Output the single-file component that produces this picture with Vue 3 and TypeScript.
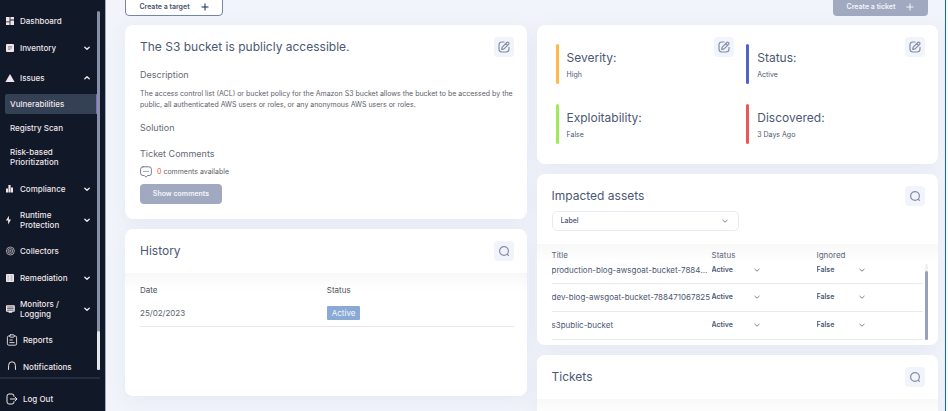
<script setup lang="ts">
import { ref } from 'vue'

interface NavChild { label: string; active?: boolean }
interface NavItem {
  label: string
  icon: string
  chevron?: 'up' | 'down'
  tall?: boolean
  children?: NavChild[]
}
interface Fact { label: string; value: string; tone: string; editable: boolean }
interface Asset { title: string; status: string; ignored: string }

const nav: NavItem[] = [
  { label: 'Dashboard', icon: 'dashboard' },
  { label: 'Inventory', icon: 'inventory', chevron: 'down' },
  {
    label: 'Issues', icon: 'issues', chevron: 'up',
    children: [
      { label: 'Vulnerabilities', active: true },
      { label: 'Registry Scan' },
      { label: 'Risk-based Prioritization' },
    ],
  },
  { label: 'Compliance', icon: 'compliance', chevron: 'down' },
  { label: 'Runtime Protection', icon: 'runtime', chevron: 'down', tall: true },
  { label: 'Collectors', icon: 'collectors' },
  { label: 'Remediation', icon: 'remediation', chevron: 'down' },
  { label: 'Monitors / Logging', icon: 'monitors', chevron: 'down', tall: true },
]

const facts: Fact[] = [
  { label: 'Severity:', value: 'High', tone: 'orange', editable: true },
  { label: 'Status:', value: 'Active', tone: 'blue', editable: true },
  { label: 'Exploitability:', value: 'False', tone: 'green', editable: false },
  { label: 'Discovered:', value: '3 Days Ago', tone: 'red', editable: false },
]

const label = ref('Label')
const assets = ref<Asset[]>([
  { title: 'production-blog-awsgoat-bucket-788471067825', status: 'Active', ignored: 'False' },
  { title: 'dev-blog-awsgoat-bucket-788471067825', status: 'Active', ignored: 'False' },
  { title: 's3public-bucket', status: 'Active', ignored: 'False' },
])
</script>

<template>
  <svg class="defs" aria-hidden="true">
    <symbol id="i-dashboard" viewBox="0 0 10 10">
      <path fill="currentColor" d="M1 1h3.6v4.4H1zM5.4 1H9v2.6H5.4zM1 6.2h3.6V9H1zM5.4 4.4H9V9H5.4z" />
    </symbol>
    <symbol id="i-inventory" viewBox="0 0 10 10">
      <rect x="1" y="1" width="8" height="8" rx="1" fill="currentColor" />
      <path d="M3 3.6h4M3 5h4M3 6.4h2.5" stroke="#111827" stroke-width=".4" />
    </symbol>
    <symbol id="i-issues" viewBox="0 0 10 10">
      <path fill="currentColor" d="M5 1l4.6 8H.4z" />
    </symbol>
    <symbol id="i-compliance" viewBox="0 0 10 10">
      <path fill="currentColor" d="M1 4.400h2v4H1zM3.400 1h2.200v7.400H3.400zM6 3.400h2v5H6z" />
    </symbol>
    <symbol id="i-runtime" viewBox="0 0 10 10">
      <path fill="currentColor" d="M3.9.8v3.6H6L3.1 9.4V5.6H.9z" />
    </symbol>
    <symbol id="i-collectors" viewBox="0 0 10 10">
      <g fill="none" stroke="currentColor" stroke-width=".8" opacity=".8">
        <circle cx="5.400" cy="5" r="4" /><circle cx="5.400" cy="5" r="2.4" /><circle cx="5.400" cy="5" r=".8" />
      </g>
    </symbol>
    <symbol id="i-remediation" viewBox="0 0 10 10">
      <rect x="1" y="1" width="8" height="8" rx=".8" fill="currentColor" />
      <path d="M2.6 3h1.2M2.6 5h1.2M2.6 7h1.2M5.6 3h1.8M5.6 5h1.8M5.6 7h1.8" stroke="#111827" stroke-width=".4" />
    </symbol>
    <symbol id="i-monitors" viewBox="0 0 10 10">
      <path fill="currentColor" d="M1.8 1.2h7.2q.8 0 .8.8v5q0 .8-.8.8H7.2v1H3.600v-1H1.800q-.8 0-.8-.8V2q0-.8.8-.8z" />
      <path d="M2.200 3h6.400M2.200 4.600h6.400M2.200 6.200h6.400" stroke="#111827" stroke-width=".6" />
    </symbol>
    <symbol id="i-reports" viewBox="0 0 12 12">
      <g fill="none" stroke="currentColor" stroke-width=".9" stroke-linecap="round" stroke-linejoin="round">
        <path d="M3.8 2H2.6Q1.4 2 1.4 3.4v6.4q0 1.4 1.4 1.4h6.4q1.4 0 1.4-1.4V3.4Q10.600 2 9.400 2H8.200" />
        <rect x="3.800" y=".8" width="4.400" height="2.400" rx=".8" />
        <path d="M3.800 6h2.600M3.800 8.600h4.400" />
      </g>
    </symbol>
    <symbol id="i-bell" viewBox="0 0 12 12">
      <path fill="none" stroke="currentColor" d="M1.800 10q.8-1 .8-3V4.400a3.400 3.600 0 0 1 6.800 0V7q0 2 .8 3z" />
    </symbol>
    <symbol id="i-logout" viewBox="0 0 12 12">
      <g fill="none" stroke="currentColor" stroke-linecap="round" stroke-linejoin="round">
        <path d="M8 3.400V3Q8 1 6 1H3Q1 1 1 3v6q0 2 2 2h3q2 0 2-2v-.4" />
        <path d="M4.400 6h6.400M9.200 4.200L11 6 9.200 7.800" />
      </g>
    </symbol>
    <symbol id="i-chevron" viewBox="0 0 8 8">
      <path fill="none" stroke="currentColor" stroke-linecap="round" stroke-linejoin="round" d="M1.800 3.200L4 5.200l2.200-2" />
    </symbol>
    <symbol id="i-plus" viewBox="0 0 8 8">
      <path fill="none" stroke="currentColor" stroke-width="1" d="M4 .5v7M.5 4h7" />
    </symbol>
    <symbol id="i-edit" viewBox="0 0 12 12">
      <g fill="none" stroke="currentColor" stroke-width="1.200" stroke-linecap="round" stroke-linejoin="round">
        <path d="M6 1H4Q1 1 1 4v4q0 3 3 3h4q3 0 3-3V6.400" />
        <path d="M8.800 1.500L4.500 5.800q-.4.400-.5 1l-.3 1.600 1.600-.3q.6-.1 1-.5l4.300-4.300q.7-.9 0-1.700-.9-.8-1.800-.1zM7.900 2.600l1.700 1.700" />
      </g>
    </symbol>
    <symbol id="i-search" viewBox="0 0 12 12">
      <g fill="none" stroke="currentColor" stroke-width="1.200" stroke-linecap="round">
        <circle cx="6" cy="6" r="4.400" /><path d="M9.400 9.400l1 1" />
      </g>
    </symbol>
    <symbol id="i-comment" viewBox="0 0 12 12">
      <g fill="none" stroke="currentColor" stroke-width=".9" stroke-linecap="round" stroke-linejoin="round">
        <path d="M3 .8h6q2.400 0 2.400 2.400v4q0 2.300-2.400 2.300H7.600L6 11.200 4.400 9.500H3Q.6 9.500.6 7.200v-4Q.6.8 3 .8z" />
        <path opacity=".7" d="M3.400 5.400h5.200" />
      </g>
    </symbol>
  </svg>

  <div class="page">
    <aside class="sidebar">
      <nav class="nav" aria-label="Main">
        <template v-for="item in nav" :key="item.label">
          <a href="#" class="nav-item" :class="{ tall: item.tall, parent: item.children }">
            <svg class="nav-icon"><use :href="'#i-' + item.icon" /></svg>
            <span class="nav-label">{{ item.label }}</span>
            <svg v-if="item.chevron" class="chevron" :class="item.chevron"><use href="#i-chevron" /></svg>
          </a>
          <div v-if="item.children" class="children">
            <a v-for="child in item.children" :key="child.label" href="#" class="child" :class="{ active: child.active }">
              <span>{{ child.label }}</span>
            </a>
          </div>
        </template>
        <a href="#" class="nav-item utility">
          <svg class="big-icon"><use href="#i-reports" /></svg><span>Reports</span>
        </a>
        <a href="#" class="nav-item utility">
          <svg class="big-icon"><use href="#i-bell" /></svg><span>Notifications</span>
        </a>
        <div class="nav-scroll"><i></i></div>
      </nav>
      <a href="#" class="logout">
        <svg class="big-icon"><use href="#i-logout" /></svg><span>Log Out</span>
      </a>
    </aside>

    <main class="main">
      <div class="topbar">
        <button type="button" class="btn outline">Create a target <svg class="plus"><use href="#i-plus" /></svg></button>
        <button type="button" class="btn solid">Create a ticket <svg class="plus"><use href="#i-plus" /></svg></button>
      </div>

      <div class="columns">
        <div class="column">
          <section class="card issue">
            <header class="issue-head">
              <h1>The S3 bucket is publicly accessible.</h1>
              <button type="button" class="icon-btn" aria-label="Edit issue"><svg><use href="#i-edit" /></svg></button>
            </header>
            <h2>Description</h2>
            <p class="description">
              The access control list (ACL) or bucket policy for the Amazon S3 bucket allows the bucket to be accessed by the
              public, all authenticated AWS users or roles, or any anonymous AWS users or roles.
            </p>
            <h2>Solution</h2>
            <h2 class="comments-title">Ticket Comments</h2>
            <p class="comments">
              <svg><use href="#i-comment" /></svg>
              <span><b>0</b> comments available</span>
            </p>
            <button type="button" class="show">Show comments</button>
          </section>

          <section class="card history">
            <header class="card-head">
              <h1>History</h1>
              <button type="button" class="icon-btn" aria-label="Search history"><svg><use href="#i-search" /></svg></button>
            </header>
            <div class="card-body">
              <table class="history-table">
                <thead><tr><th>Date</th><th>Status</th></tr></thead>
                <tbody><tr><td>25/02/2023</td><td><span class="tag">Active</span></td></tr></tbody>
              </table>
            </div>
          </section>
        </div>

        <div class="column">
          <section class="card facts">
            <div v-for="fact in facts" :key="fact.label" class="fact">
              <i class="bar" :class="fact.tone"></i>
              <div class="fact-text">
                <h3>{{ fact.label }}</h3>
                <p>{{ fact.value }}</p>
              </div>
              <button v-if="fact.editable" type="button" class="icon-btn" :aria-label="'Edit ' + fact.label">
                <svg><use href="#i-edit" /></svg>
              </button>
            </div>
          </section>

          <section class="card assets">
            <header class="assets-head">
              <div class="row">
                <h1>Impacted assets</h1>
                <button type="button" class="icon-btn" aria-label="Search assets"><svg><use href="#i-search" /></svg></button>
              </div>
              <div class="select label-select">
                <select v-model="label" aria-label="Label"><option>Label</option></select>
                <svg class="caret"><use href="#i-chevron" /></svg>
              </div>
            </header>
            <div class="card-body assets-body">
              <table class="assets-table">
                <thead><tr><th class="c-title">Title</th><th class="c-status">Status</th><th>Ignored</th></tr></thead>
                <tbody>
                  <tr v-for="asset in assets" :key="asset.title">
                    <td class="title">{{ asset.title }}</td>
                    <td>
                      <div class="select cell-select">
                        <select v-model="asset.status" :aria-label="'Status of ' + asset.title"><option>Active</option></select>
                        <svg class="caret"><use href="#i-chevron" /></svg>
                      </div>
                    </td>
                    <td>
                      <div class="select cell-select">
                        <select v-model="asset.ignored" :aria-label="'Ignored state of ' + asset.title"><option>False</option></select>
                        <svg class="caret"><use href="#i-chevron" /></svg>
                      </div>
                    </td>
                  </tr>
                </tbody>
              </table>
              <div class="table-scroll"><i></i></div>
            </div>
          </section>

          <section class="card tickets">
            <header class="card-head">
              <h1>Tickets</h1>
              <button type="button" class="icon-btn" aria-label="Search tickets"><svg><use href="#i-search" /></svg></button>
            </header>
            <div class="card-body"></div>
          </section>
        </div>
      </div>
    </main>
    <div class="edge"></div>
  </div>
</template>

<style>
body { background: #f1f4fa; overflow: hidden; }
</style>

<style scoped>
* { box-sizing: border-box; }
h1, h2, h3, p { margin: 0; font-weight: 400; }
a { color: inherit; text-decoration: none; }
button, select { font: inherit; color: inherit; border: 0; padding: 0; background: none; }
svg { display: block; flex: none; }
.defs { position: absolute; width: 0; height: 0; }

.page {
  display: flex;
  height: 100vh;
  overflow: hidden;
  font-family: Inter, "Liberation Sans", sans-serif;
  font-size: 8px;
  line-height: 10px;
  color: #4b5873;
  background: #f1f4fa;
}

.sidebar {
  display: flex;
  flex-direction: column;
  flex: none;
  width: 106px;
  background: #111827;
  color: #eee6ea;
  border-right: 1px solid #a3abc0;
  font-weight: 500;
}
.nav {
  position: relative;
  flex: 1;
  min-height: 0;
  overflow: hidden;
  padding: 7px 7px 0 5px;
}
.nav-item { display: flex; align-items: center; height: 27px; }
.nav-item.parent { height: 33px; }
.nav-item.tall { height: 35px; }
.nav-icon { width: 10px; height: 10px; margin-right: 5px; }
.nav-label { width: 56px; }
.chevron { width: 8px; height: 8px; margin-left: 7px; stroke-width: 1.4; }
.chevron.up { transform: rotate(180deg); }
.children { display: flex; flex-direction: column; gap: 4px; padding-bottom: 3px; }
.child { display: flex; align-items: center; height: 20px; padding-left: 5px; border-radius: 2px; }
.child:last-child { height: 30px; }
.child span { width: 70px; }
.child.active { background: #344054; border-right: 2px solid #8468c8; }
.utility { padding-left: 1px; gap: 5px; }
.big-icon { width: 12px; height: 12px; }
.nav-scroll {
  position: absolute;
  top: 11px;
  right: 5px;
  bottom: 0;
  width: 3px;
  background: #8790a8;
  border-radius: 2px;
}
.nav-scroll i { position: absolute; inset: auto 0 0; height: 39px; background: #e4e7ee; border-radius: 2px; }
.logout {
  display: flex;
  align-items: center;
  gap: 5px;
  height: 34px;
  margin: 7px 5px 0 0;
  padding: 8px 0 0 6px;
  border-top: 2px solid #242c3d;
}

.main { flex: 1; min-width: 0; padding: 0 7px 0 19px; overflow: hidden; }
.topbar {
  display: flex;
  justify-content: space-between;
  align-items: flex-end;
  height: 16px;
  padding-right: 10px;
  overflow: hidden;
}
.btn {
  display: flex;
  align-items: center;
  justify-content: center;
  gap: 11px;
  flex: none;
  width: 98px;
  height: 20px;
  padding-top: 1px;
  border-radius: 4px;
  font-size: 7px;
  font-weight: 600;
}
.btn.solid { width: 95px; background: #a1a9c0; color: #f3f5fa; }
.btn.outline { border: 1px solid #7884a8; background: #fff; color: #46526e; }
.btn.outline .plus { color: #17285c; }
.plus { width: 8px; height: 8px; }

.columns { display: grid; grid-template-columns: 1fr 1fr; gap: 10px; margin-top: 9px; }
.column { display: flex; flex-direction: column; gap: 10px; min-width: 0; }
.card { background: #fff; border-radius: 8px; box-shadow: 0 4px 20px rgba(80, 100, 150, .07); overflow: hidden; }
h1, h3 { font-size: 12px; line-height: 16px; }
.icon-btn {
  display: grid;
  place-items: center;
  flex: none;
  width: 20px;
  height: 20px;
  border-radius: 4px;
  background: #f1f4fa;
  color: #858da6;
}
.icon-btn svg { width: 12px; height: 12px; }

.issue { padding: 12px 13px 15px 15px; }
.issue-head { display: flex; justify-content: space-between; align-items: center; }
h2 { font-size: 9px; line-height: 12px; margin-top: 12px; color: #666b76; }
.description { margin-top: 7px; margin-right: -7px; font-size: 7px; line-height: 11px; color: #5c6068; }
.comments-title { margin-top: 14px; }
.comments { display: flex; align-items: center; gap: 5px; margin-top: 6px; font-size: 7px; line-height: 12px; color: #5c6068; }
.comments svg { width: 12px; height: 12px; color: #69738f; }
.comments b { font-weight: 400; color: #ef5350; }
.show {
  display: block;
  width: 82px;
  height: 20px;
  margin-top: 6px;
  border-radius: 4px;
  background: #a1a9c0;
  color: #f3f5fa;
  font-size: 7px;
  font-weight: 600;
}

.card-head { display: flex; justify-content: space-between; align-items: center; height: 44px; padding: 0 13px 0 15px; }
.card-body { background: linear-gradient(#f8f8f9, #fff 18px); }
.history { height: 167px; }
.history .card-body { padding: 9px 13px 0 15px; }
table { width: 100%; border-collapse: collapse; table-layout: fixed; }
th, td { padding: 0; text-align: left; font-weight: 400; }
.history-table th { height: 15px; color: #4f5358; }
.history-table tbody td { height: 29px; padding-top: 4px; border-bottom: 1px solid #e9eaed; }
.history-table { color: #5c6472; }
.tag {
  display: inline-block;
  padding: 2px 5px;
  background: #8aaad6;
  color: #f5f8fd;
  border-radius: 1px;
}

.facts {
  display: grid;
  grid-template-columns: 1fr 1fr;
  gap: 13px 12px;
  height: 139px;
  padding: 12px 13px 0 19px;
  align-content: start;
}
.fact { display: flex; align-items: flex-start; min-width: 0; }
.bar { flex: none; width: 3px; height: 40px; margin-top: 7px; border-radius: 2px; }
.orange { background: #ffb946; }
.blue { background: #5063c8; }
.green { background: #9eea5c; }
.red { background: #eb5757; }
.fact-text { flex: 1; margin: 13px 0 0 8px; }
.fact-text p { margin-top: 4px; font-size: 7px; }

.assets { height: 171px; }
.assets-head { height: 70px; padding: 12px 13px 0 15px; }
.row { display: flex; justify-content: space-between; align-items: center; }
.select { position: relative; }
.select select { width: 100%; appearance: none; outline: 0; }
.caret { position: absolute; top: 50%; right: 0; width: 8px; height: 8px; margin-top: -4px; pointer-events: none; color: #7b849a; }
.label-select { width: 187px; margin-top: 5px; }
.label-select select {
  height: 20px;
  padding-left: 8px;
  border: 1px solid #e8ebf3;
  border-radius: 5px;
  background: #fff;
  font-size: 7px;
  font-weight: 500;
}
.label-select .caret { right: 10px; }
.assets-body { position: relative; padding: 2px 15px 0; }
.assets-table th { height: 17px; color: #5c6577; }
.c-title { width: 160px; }
.c-status { width: 105px; }
.assets-table td { height: 28px; border-bottom: 1px solid #e9eaed; }
.assets-table tbody tr:first-child td { height: 20px; padding-bottom: 5px; }
.title { overflow: hidden; white-space: nowrap; text-overflow: ellipsis; }
.cell-select { width: 49px; }
.cell-select select { display: block; height: 12px; font-size: 7px; font-weight: 600; }
.table-scroll { position: absolute; top: 20px; right: 10px; bottom: 0; width: 3px; background: #eef0f4; border-radius: 2px; }
.table-scroll i { position: absolute; inset: 7px 0 0; background: #98a1b9; border-radius: 2px; }
.tickets .card-body { height: 80px; }

.edge { flex: none; width: 3px; border-left: 1px solid #0b63e5; background: #f7f9fc; }
</style>
